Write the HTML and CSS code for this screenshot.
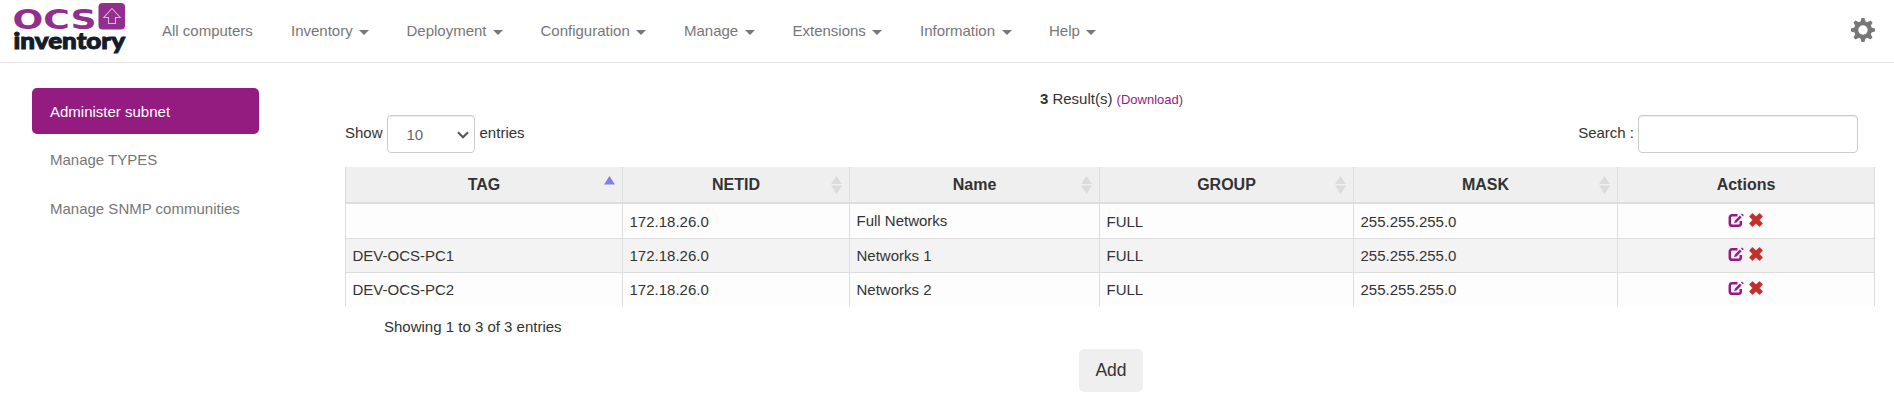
FILE: index.html
```html
<!DOCTYPE html>
<html lang="en">
<head>
<meta charset="utf-8">
<title>OCS Inventory</title>
<link rel="stylesheet" href="styles.css">
</head>
<body>
<svg class="sprite" width="0" height="0">
  <symbol id="edit" viewBox="0 0 16 15">
    <path d="M9.500 2.200H4.200Q1.800 2.200 1.800 4.600V10.400Q1.800 12.800 4.200 12.800H10.600Q12.800 12.800 12.800 10.600V8" fill="none" stroke="currentColor" stroke-width="2.500"/>
    <path d="M6 10.300L7 7.400L11.800 2.400L13.600 4.200L8.800 9.200Z" fill="currentColor"/>
    <path d="M13 1.600L14 .6L15.800 2.200L14.600 3.300Z" fill="currentColor"/>
  </symbol>
  <symbol id="remove" viewBox="0 0 14 14">
    <path d="M3.400 .3L7 3.600L10.600 .3L13.700 3.400L10.400 7L13.700 10.600L10.600 13.700L7 10.400L3.400 13.700L.3 10.600L3.600 7L.3 3.400Z" fill="currentColor" stroke="currentColor" stroke-width=".4"/>
  </symbol>
  <symbol id="both" viewBox="0 0 11 18">
    <path d="M5.500 0L11 8H0ZM0 9.500H11L5.500 18Z" fill="#dcdcdc"/>
  </symbol>
</svg>
<header class="navbar">
  <svg class="logo" width="113" height="55" viewBox="0 0 113 55">
    <text class="logo-ocs" x="-1.500" y="29" textLength="84" lengthAdjust="spacingAndGlyphs">OCS</text>
    <rect x="84.500" y="3" width="26.500" height="26.500" rx="4" fill="#922f8e"/>
    <path d="M98 8.500L106.200 17.500H101.500V23.500H94.500V17.500H89.800Z" fill="none" stroke="#d9b2d8" stroke-width="1.100"/>
    <text class="logo-inv" x="-.5" y="48.800" textLength="111.500" lengthAdjust="spacingAndGlyphs">inventory</text>
  </svg>
  <nav class="menu">
    <a class="w1">All computers</a>
    <a class="w2">Inventory<i class="caret"></i></a>
    <a class="w3">Deployment<i class="caret"></i></a>
    <a class="w4">Configuration<i class="caret"></i></a>
    <a class="w5">Manage<i class="caret"></i></a>
    <a class="w6">Extensions<i class="caret"></i></a>
    <a class="w7">Information<i class="caret"></i></a>
    <a>Help<i class="caret"></i></a>
  </nav>
  <svg class="gear" width="24" height="24" viewBox="-12 -12 24 24">
    <g fill="#777">
      <path id="t" d="M-2.600 -8L-1.500 -12H1.500L2.600 -8V8L1.500 12H-1.500L-2.600 8Z"/>
      <use href="#t" transform="rotate(45)"/>
      <use href="#t" transform="rotate(90)"/>
      <use href="#t" transform="rotate(135)"/>
      <circle r="9"/>
    </g>
    <circle r="4.700" fill="#fff"/>
  </svg>
</header>
<div class="layout">
  <aside class="side">
    <a class="active">Administer subnet</a>
    <a>Manage TYPES</a>
    <a>Manage SNMP communities</a>
  </aside>
  <main class="main">
    <div class="result"><b>3</b> Result(s) <a class="download">(Download)</a></div>
    <div class="tools">
      <div class="length">Show
        <span class="select">10<svg width="12" height="8" viewBox="0 0 12 8"><path d="M1 1.200L6 6.200L11 1.200" fill="none" stroke="#555" stroke-width="2.100"/></svg></span>
        <span class="entries">entries</span></div>
      <label class="search">Search : <input type="text"></label>
    </div>
    <table class="grid">
      <colgroup><col class="c1"><col class="c2"><col class="c3"><col class="c4"><col class="c5"><col class="c6"></colgroup>
      <thead>
        <tr>
          <th>TAG<svg class="sort" width="11" height="18" viewBox="0 0 11 18"><path d="M5.500 0L11 8.500H0Z" fill="#8080df"/></svg></th>
          <th>NETID<svg class="sort" width="11" height="18"><use href="#both"/></svg></th>
          <th>Name<svg class="sort" width="11" height="18"><use href="#both"/></svg></th>
          <th>GROUP<svg class="sort" width="11" height="18"><use href="#both"/></svg></th>
          <th>MASK<svg class="sort" width="11" height="18"><use href="#both"/></svg></th>
          <th>Actions</th>
        </tr>
      </thead>
      <tbody>
        <tr class="first"><td></td><td>172.18.26.0</td><td class="name">Full Networks</td><td>FULL</td><td>255.255.255.0</td><td><div class="actions"><svg class="edit" width="16" height="15"><use href="#edit"/></svg><svg class="remove" width="14" height="14"><use href="#remove"/></svg></div></td></tr>
        <tr class="odd"><td>DEV-OCS-PC1</td><td>172.18.26.0</td><td>Networks 1</td><td>FULL</td><td>255.255.255.0</td><td><div class="actions"><svg class="edit" width="16" height="15"><use href="#edit"/></svg><svg class="remove" width="14" height="14"><use href="#remove"/></svg></div></td></tr>
        <tr class="last"><td>DEV-OCS-PC2</td><td>172.18.26.0</td><td>Networks 2</td><td>FULL</td><td>255.255.255.0</td><td><div class="actions"><svg class="edit" width="16" height="15"><use href="#edit"/></svg><svg class="remove" width="14" height="14"><use href="#remove"/></svg></div></td></tr>
      </tbody>
    </table>
    <div class="info">Showing 1 to 3 of 3 entries</div>
    <button class="add">Add</button>
  </main>
</div>
</body>
</html>
```

FILE: styles.css
```css
* { box-sizing: border-box; }
body { margin: 0; background: #fff; color: #333; font: 15px/21px "Liberation Sans", Arial, sans-serif; overflow: hidden; }
.sprite { display: block; height: 0; }
.navbar { display: flex; height: 63px; padding-left: 14px; border-bottom: 1px solid #e7e7e7; color: #777; }
.logo { flex: none; overflow: visible; }
.logo-ocs { font: bold 26px "DejaVu Sans", sans-serif; fill: #922f8e; }
.logo-inv { font: 900 23px Lato, sans-serif; fill: #141c2c; stroke: #141c2c; stroke-width: 1px; }
.menu { display: flex; margin-left: 35px; padding-top: 20px; }
.menu a { white-space: nowrap; }
.w1 { width: 129px; }
.w2 { width: 115.500px; }
.w3 { width: 134px; }
.w4 { width: 143.500px; }
.w5 { width: 108.500px; }
.w6 { width: 127.500px; }
.w7 { width: 129px; }
.caret { display: inline-block; margin-left: 6.500px; border: 5px solid transparent; border-top-color: #777; border-bottom: 0; vertical-align: 1px; }
.gear { margin: 18px 19px 0 auto; }
.layout { display: flex; }
.side { width: 227px; margin: 25px 0 0 32px; display: flex; flex-direction: column; gap: 3px; color: #777; }
.side a { height: 46px; padding: 12px 18px; border-radius: 5px; }
.side .active { background: #941b80; color: #fff; padding-top: 13px; }
.main { width: 1530px; margin-left: 86px; padding-top: 25px; display: flex; flex-direction: column; }
.result { text-align: center; height: 27px; white-space: nowrap; padding-left: 3px; }
.download { font-size: 13px; color: #941b80; }
.tools { display: flex; justify-content: space-between; height: 52px; line-height: 36px; padding-right: 17px; }
.length { display: flex; gap: 4px; }
.entries { padding-left: 1px; }
.select { display: flex; align-items: center; justify-content: space-between; width: 88px; height: 38px; padding: 2px 5px 0 19px; border: 1px solid #ccc; border-radius: 4px; box-shadow: inset 0 1px 1px rgba(0,0,0,.075); color: #666; }
.search { display: flex; gap: 4px; }
.search input { width: 220px; height: 38px; border: 1px solid #ccc; border-radius: 4px; box-shadow: inset 0 1px 1px rgba(0,0,0,.075); }
.grid { width: 1530px; table-layout: fixed; border-collapse: separate; border-spacing: 0; border-left: 1px solid #ddd; }
.c1 { width: 277px; }
.c2 { width: 227px; }
.c3 { width: 250px; }
.c4 { width: 254px; }
.c5 { width: 264px; }
.c6 { width: 257px; }
.grid th { position: relative; height: 37px; padding: 0 0 1px; background: #efefef; border-right: 1px solid #ddd; border-bottom: 2px solid #ddd; font-size: 16px; }
.sort { position: absolute; right: 7px; top: 9px; }
.grid td { height: 34px; padding: 0 6.500px 1px; background: #fdfdfd; border-right: 1px solid #ddd; border-bottom: 1px solid #ddd; }
.grid .first td { height: 35px; padding-top: 1px; padding-bottom: 0; }
.grid .first .name { padding-top: 0; padding-bottom: 1px; }
.grid .odd td { background: #f3f3f3; }
.grid .last td { height: 33px; border-bottom-width: 0; }
.actions { display: flex; justify-content: center; gap: 5px; padding: 0 1px 1px 0; }
.first .actions { padding-bottom: 3px; }
.edit { color: #941b80; }
.remove { color: #c32f2b; }
.info { padding: 10px 0 0 39px; height: 43px; }
.add { align-self: center; width: 64px; height: 43px; margin-left: 2px; border: 0; border-radius: 5px; background: #efefef; color: #333; font: 17.500px "Liberation Sans", Arial, sans-serif; padding: 0 0 1px; }
```
